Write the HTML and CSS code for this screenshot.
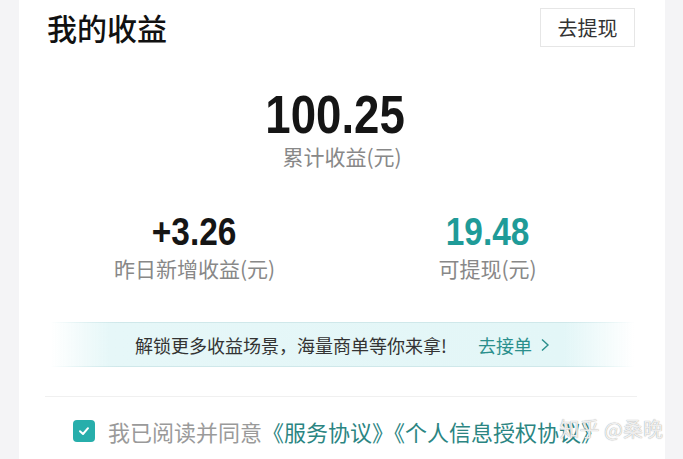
FILE: index.html
```html
<!DOCTYPE html>
<html lang="zh-CN">
<head>
  <meta charset="UTF-8" />
  <meta name="viewport" content="width=device-width, initial-scale=1.0"/>
  <title>我的收益</title>
  <link rel="stylesheet" href="styles.css">
</head>
<body>

<div class="card">
  <header class="top">
    <h1>我的收益</h1>
    <button class="withdraw-btn">去提现</button>
  </header>

  <!-- total -->
  <div class="total">
    <div class="num big">100.25</div>
    <div class="label">累计收益(元)</div>
  </div>

  <!-- yesterday / withdrawable -->
  <div class="stats">
    <div class="stat">
      <div class="num mid">+3.26</div>
      <div class="label">昨日新增收益(元)</div>
    </div>
    <div class="stat">
      <div class="num mid teal">19.48</div>
      <div class="label">可提现(元)</div>
    </div>
  </div>

  <div class="banner">
    <span>解锁更多收益场景，海量商单等你来拿!</span>
    <a class="banner-link">去接单
      <svg width="10" height="14" viewBox="0 0 10 14"><path d="M2 1.5 L8 7 L2 12.5" fill="none" stroke="#2a8f8c" stroke-width="1.4"/></svg>
    </a>
  </div>

  <div class="agree">
    <span class="check">
      <svg width="14" height="14" viewBox="0 0 14 14"><path d="M3 7.2 L6 10 L11 4.2" fill="none" stroke="#fff" stroke-width="2" stroke-linecap="round" stroke-linejoin="round"/></svg>
    </span>
    <span class="agree-text">我已阅读并同意<a>《服务协议》</a><a>《个人信息授权协议》</a></span>
    <span class="mark">知乎 @桑晚</span>
  </div>
</div>

</body>
</html>
```

FILE: styles.css
```css
body {
  margin: 0;
  background: #f4f4f6;
  font-family: "Noto Sans CJK SC", "Noto Sans", sans-serif;
  color: #222;
}
.card {
  position: relative;
  margin: 0 18px 0 19px;
  height: 459px;
  background: #fff;
  overflow: hidden;
}
.top {
  display: flex;
  justify-content: space-between;
  align-items: center;
  padding: 5px 30px 0 28px;
}
.top h1 {
  margin: 0;
  font-size: 30px;
  font-weight: 500;
  color: #111;
}
.withdraw-btn {
  width: 95px;
  height: 39px;
  border: 1px solid #e6e6e6;
  background: #fff;
  font-family: inherit;
  font-size: 20px;
  color: #333;
  padding: 0;
}
/* numbers use a squeezed bold sans */
.num {
  font-family: "Liberation Sans", Arial, sans-serif;
  font-weight: 700;
  line-height: 1;
  color: #151515;
}
.num.big {
  font-size: 53px;
  margin-right: 14px;
  transform: scaleX(0.86);
}
.num.mid {
  font-size: 38px;
  transform: scaleX(0.88);
}
.num.teal {
  color: #1f9b98;
}
.label {
  font-size: 21px;
  line-height: 25px;
  color: #888;
}
.total,
.stat {
  display: flex;
  flex-direction: column;
  align-items: center;
}
.total {
  margin-top: 39px;
}
.total .label {
  margin-top: 3px;
}
.stats {
  display: grid;
  grid-template-columns: 1fr 1fr;
  margin: 44px 31px 0 29px;
}
.stat .label {
  margin-top: 5px;
}
.banner {
  display: flex;
  justify-content: center;
  align-items: center;
  gap: 31px;
  height: 43px;
  margin: 41px 31px 0 32px;
  font-size: 18px;
  color: #333;
  background: linear-gradient(90deg, rgba(228, 246, 247, 0) 0%, #e6f7f8 10%, #e3f6f7 88%, rgba(228, 246, 247, 0) 100%);
  border-style: solid;
  border-width: 1px 0;
  border-image: linear-gradient(90deg, rgba(205, 232, 234, 0), #cfe8ea 12%, #cfe8ea 88%, rgba(205, 232, 234, 0)) 1;
}
.banner-link {
  display: flex;
  align-items: center;
  gap: 8px;
  color: #2a8f8c;
}
.agree {
  display: flex;
  align-items: center;
  margin: 29px 28px 0 26px;
  padding-top: 19px;
  border-top: 1px solid #f0f0f0;
  font-size: 22px;
  line-height: 30px;
}
.check {
  display: flex;
  align-items: center;
  justify-content: center;
  width: 22px;
  height: 22px;
  margin-left: 28px;
  margin-right: 13px;
  border-radius: 4px;
  background: #27aeab;
}
.agree-text {
  color: #9a9a9a;
  white-space: nowrap;
}
.agree-text a {
  color: #2b8582;
}
/* site watermark over the corner */
.mark {
  position: absolute;
  right: 2px;
  bottom: 15px;
  font-size: 20px;
  color: rgba(255, 255, 255, 0.85);
  text-shadow: 0 0 1px #8a8a8a;
}
```
